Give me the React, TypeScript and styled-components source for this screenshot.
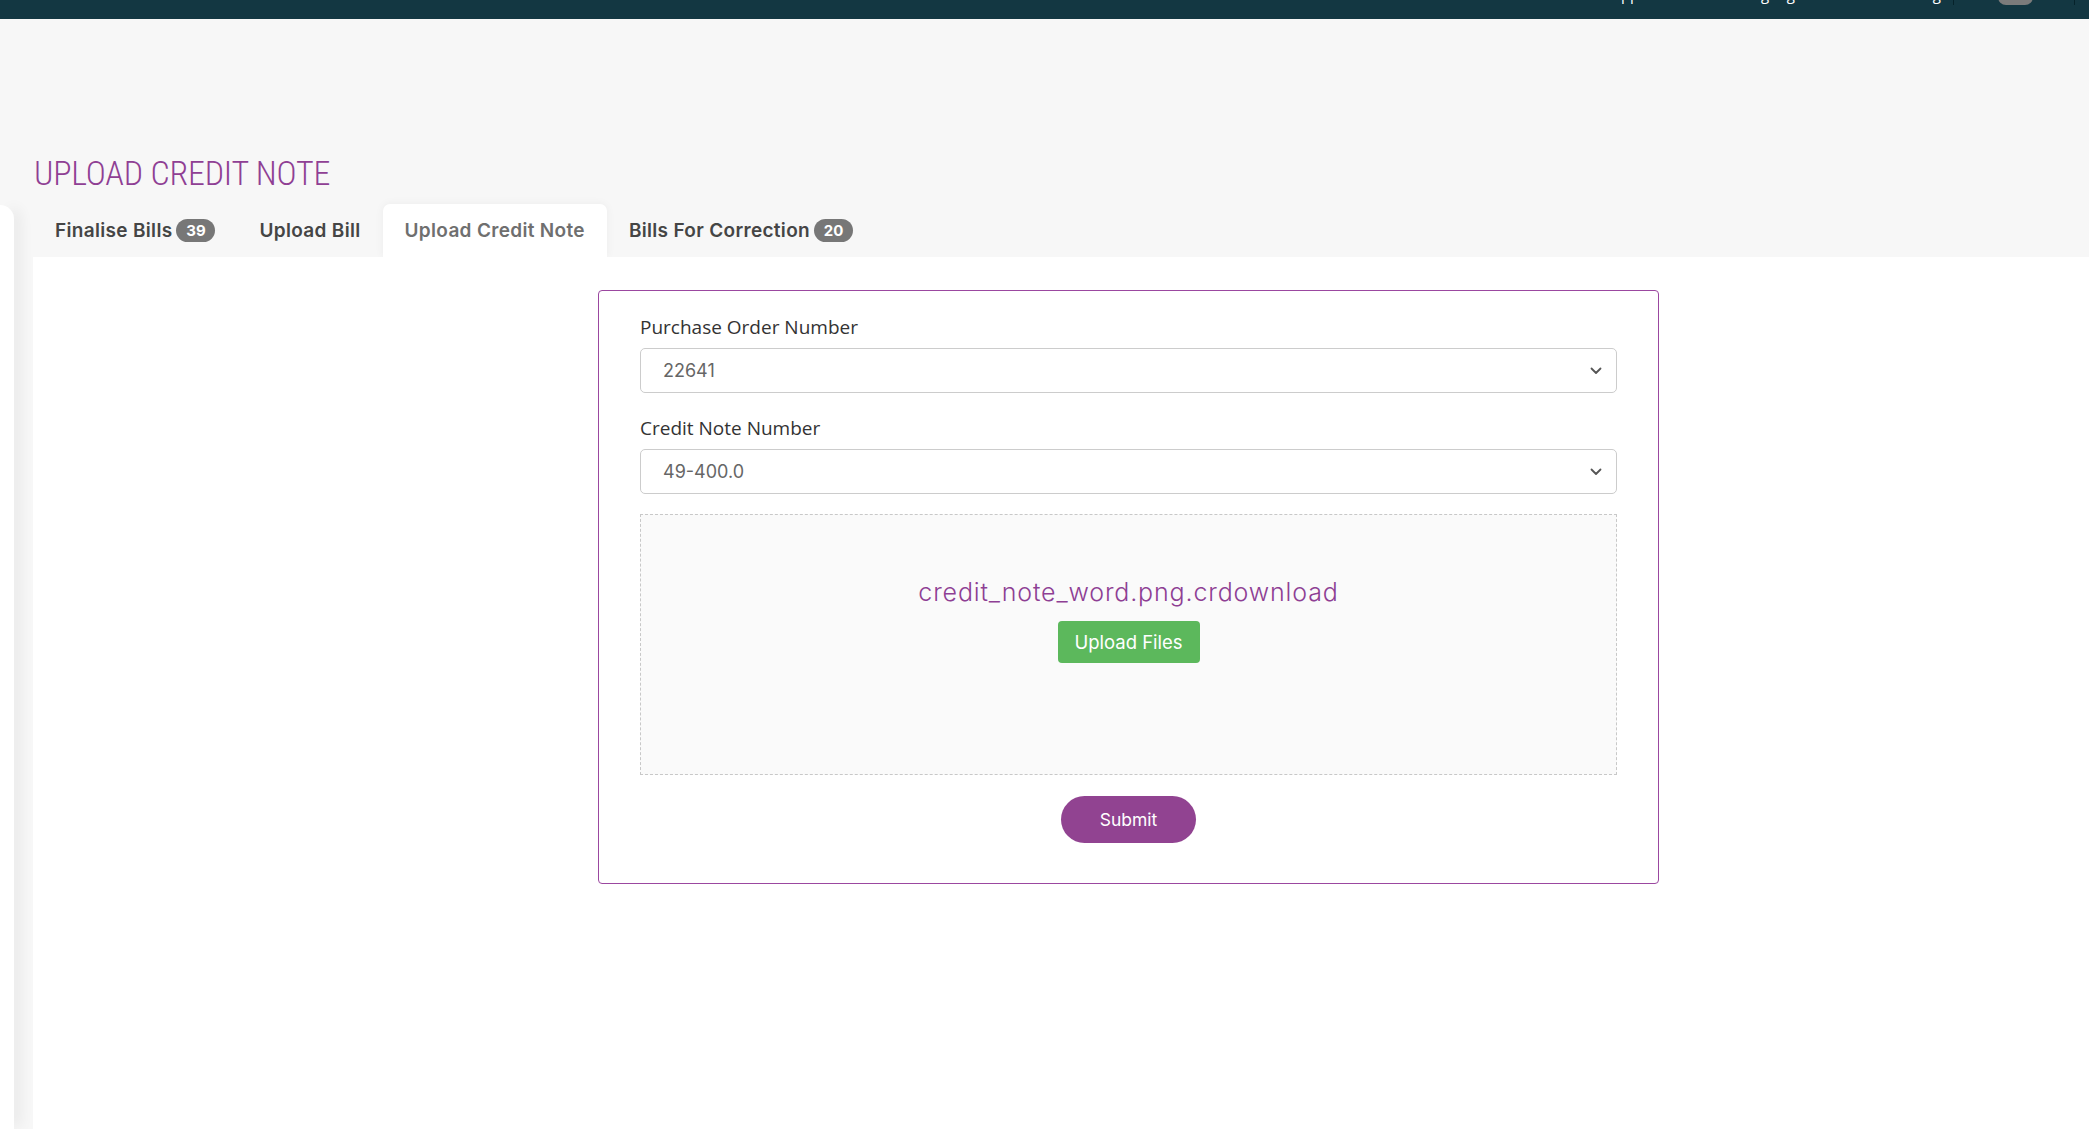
import React from 'react';
import styled, { createGlobalStyle } from 'styled-components';

const GlobalStyle = createGlobalStyle`
  html, body {
    margin: 0;
    padding: 0;
    background: #f7f7f7;
  }
  body {
    font-family: Inter, "Noto Sans", sans-serif;
  }
  * {
    box-sizing: border-box;
  }
`;

const TopBar = styled.header`
  height: 19px;
  background: #133742;
  display: flex;
  justify-content: flex-end;
  align-items: flex-start;
  overflow: hidden;
  padding-right: 14px;
`;

const NavLink = styled.span<{ gap: number }>`
  font-family: 'Open Sans', sans-serif;
  font-size: 15px;
  line-height: 15px;
  color: #ffffff;
  margin-top: -13px;
  margin-right: ${(p) => p.gap}px;
`;

const NavDivider = styled.span`
  width: 1px;
  height: 5px;
  background: #06222a;
`;

const NavPill = styled.span`
  width: 35px;
  height: 20px;
  margin: -15px 41px 0 44px;
  border-radius: 8px;
  background: #7b7b7b;
`;

const Shell = styled.div`
  display: flex;
  min-height: calc(100vh - 19px);
`;

const Sidebar = styled.aside`
  width: 14px;
  flex-shrink: 0;
  margin-top: 186px;
  background: #ffffff;
  border-top-right-radius: 14px;
  box-shadow: 8px 0 14px -2px rgba(0, 0, 0, 0.07);
  position: relative;
  z-index: 1;
`;

const Main = styled.main`
  flex: 1;
  margin-left: 19px;
  display: flex;
  flex-direction: column;
`;

const PageTitle = styled.h1`
  margin: 134px 0 0 1px;
  font-family: Roboto, sans-serif;
  font-weight: 300;
  font-stretch: 78%;
  font-size: 34px;
  line-height: 41px;
  color: #8f3f94;
  letter-spacing: -0.2px;
`;

const TabRow = styled.nav`
  display: flex;
  align-items: flex-end;
  height: 53px;
  margin-top: 10px;
`;

const Tab = styled.div<{ active?: boolean }>`
  height: 53px;
  display: flex;
  align-items: center;
  gap: 4px;
  padding: 0 22px;
  font-size: 19px;
  font-weight: 600;
  letter-spacing: 0.32px;
  color: ${(p) => (p.active ? '#6f6f6f' : '#454545')};
  background: ${(p) => (p.active ? '#ffffff' : 'transparent')};
  border-radius: 7px 7px 0 0;
  box-shadow: ${(p) => (p.active ? '0 0 10px rgba(0, 0, 0, 0.05)' : 'none')};
`;

const Badge = styled.span`
  height: 23px;
  min-width: 39px;
  padding: 0 8px;
  border-radius: 12px;
  background: #777777;
  color: #ffffff;
  font-size: 15px;
  font-weight: 700;
  letter-spacing: 0;
  display: inline-flex;
  align-items: center;
  justify-content: center;
`;

const Content = styled.section`
  flex: 1;
  background: #ffffff;
  padding: 33px 0 40px 565px;
`;

const Card = styled.form`
  width: 1061px;
  border: 1.5px solid #9b47a0;
  border-radius: 4px;
  padding: 23px 41px 40px;
  display: flex;
  flex-direction: column;
`;

const Field = styled.div`
  display: flex;
  flex-direction: column;
  margin-bottom: 22px;
`;

const Label = styled.label`
  font-family: 'Open Sans', sans-serif;
  font-size: 19px;
  line-height: 27px;
  color: #333333;
  margin-bottom: 7px;
`;

const Select = styled.div`
  height: 45px;
  border: 1px solid #cccccc;
  border-radius: 5px;
  padding: 0 14px 0 22px;
  display: flex;
  align-items: center;
  justify-content: space-between;
  font-size: 18px;
  color: #666666;
`;

const Chevron = () => (
  <svg width="12" height="8" viewBox="0 0 12 8" fill="none">
    <path d="M1.5 1.5 6 6l4.5-4.5" stroke="#555" strokeWidth="1.8" strokeLinecap="round" strokeLinejoin="round" />
  </svg>
);

const DropZone = styled.div`
  height: 261px;
  margin-top: -2px;
  background: #fafafa;
  border: 1px dashed #c8c8c8;
  display: flex;
  flex-direction: column;
  align-items: center;
  padding-top: 61px;
`;

const FileName = styled.div`
  font-size: 25px;
  font-weight: 300;
  line-height: 32px;
  letter-spacing: 0.85px;
  color: #8e3f94;
`;

const UploadButton = styled.button`
  margin-top: 13px;
  height: 42px;
  width: 142px;
  border: none;
  border-radius: 4px;
  background: #5cb85c;
  color: #ffffff;
  font-family: Inter, sans-serif;
  font-size: 18.5px;
`;

const SubmitButton = styled.button`
  align-self: center;
  margin-top: 21px;
  height: 47px;
  width: 135px;
  border: none;
  border-radius: 24px;
  background: #914391;
  color: #ffffff;
  font-family: Inter, sans-serif;
  font-size: 17.5px;
`;

const tabs = [
  { label: 'Finalise Bills', count: 39 },
  { label: 'Upload Bill' },
  { label: 'Upload Credit Note', active: true },
  { label: 'Bills For Correction', count: 20 },
];

export default function App() {
  return (
    <>
      <GlobalStyle />
      <TopBar>
        <NavLink gap={76}>Support</NavLink>
        <NavLink gap={89}>Language</NavLink>
        <NavLink gap={5}>Settings</NavLink>
        <NavDivider />
        <NavPill />
        <NavDivider />
      </TopBar>
      <Shell>
        <Sidebar />
        <Main>
          <PageTitle>UPLOAD CREDIT NOTE</PageTitle>
          <TabRow>
            {tabs.map((t) => (
              <Tab key={t.label} active={t.active}>
                {t.label}
                {t.count !== undefined && <Badge>{t.count}</Badge>}
              </Tab>
            ))}
          </TabRow>
          <Content>
            <Card>
              <Field>
                <Label>Purchase Order Number</Label>
                <Select>
                  22641
                  <Chevron />
                </Select>
              </Field>
              <Field>
                <Label>Credit Note Number</Label>
                <Select>
                  49-400.0
                  <Chevron />
                </Select>
              </Field>
              <DropZone>
                <FileName>credit_note_word.png.crdownload</FileName>
                <UploadButton type="button">Upload Files</UploadButton>
              </DropZone>
              <SubmitButton type="button">Submit</SubmitButton>
            </Card>
          </Content>
        </Main>
      </Shell>
    </>
  );
}
